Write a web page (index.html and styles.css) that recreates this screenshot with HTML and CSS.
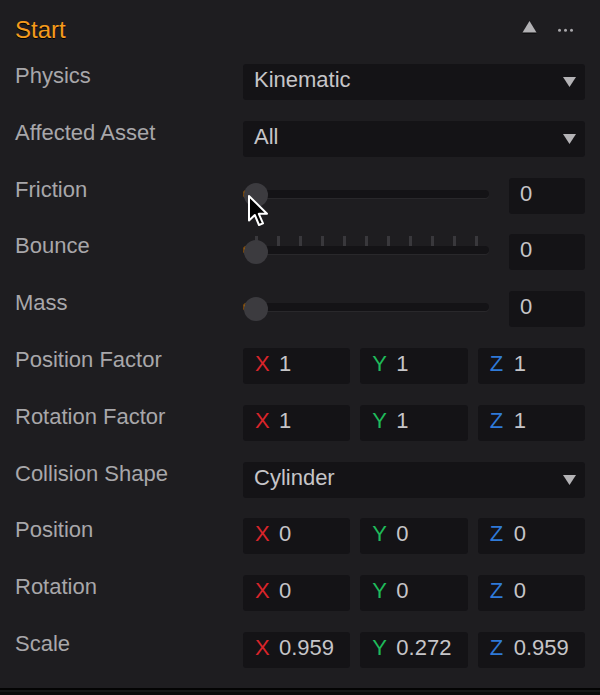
FILE: index.html
```html
<!DOCTYPE html>
<html>
<head>
<meta charset="utf-8">
<link rel="stylesheet" href="styles.css">
</head>
<body>
<div class="panel">
  <div class="header">
    <span class="title">Start</span>
    <svg class="hdr-icons" width="63" height="14" viewBox="0 0 63 14">
      <polygon points="0.5,13.6 7.5,2.2 14.5,13.6" fill="#050505"/>
      <polygon points="0.5,12.4 7.5,1 14.5,12.4" fill="#b3b2b5"/>
      <circle cx="37.5" cy="10.3" r="1.5" fill="#a9a8ab"/>
      <circle cx="43.5" cy="10.3" r="1.5" fill="#a9a8ab"/>
      <circle cx="49.5" cy="10.3" r="1.5" fill="#a9a8ab"/>
    </svg>
  </div>
  <div class="rows">
    <div class="row">
      <div class="label">Physics</div>
      <div class="box select"><span>Kinematic</span><svg class="caret" width="13" height="10" viewBox="0 0 13 10"><polygon points="0,0 13,0 6.5,10" fill="#b4b3b6"/></svg></div>
    </div>
    <div class="row">
      <div class="label">Affected Asset</div>
      <div class="box select"><span>All</span><svg class="caret" width="13" height="10" viewBox="0 0 13 10"><polygon points="0,0 13,0 6.5,10" fill="#b4b3b6"/></svg></div>
    </div>
    <div class="row">
      <div class="label">Friction</div>
      <div class="slider-row">
        <div class="slider">
          <div class="track"></div>
          <div class="fill"></div>
          <div class="thumb"></div>
        </div>
        <div class="box num">0</div>
      </div>
    </div>
    <div class="row">
      <div class="label">Bounce</div>
      <div class="slider-row">
        <div class="slider">
          <div class="ticks">
            <i></i><i></i><i></i><i></i><i></i><i></i><i></i><i></i><i></i><i></i><i></i>
          </div>
          <div class="track"></div>
          <div class="fill"></div>
          <div class="thumb"></div>
        </div>
        <div class="box num">0</div>
      </div>
    </div>
    <div class="row">
      <div class="label">Mass</div>
      <div class="slider-row">
        <div class="slider">
          <div class="track"></div>
          <div class="fill"></div>
          <div class="thumb"></div>
        </div>
        <div class="box num">0</div>
      </div>
    </div>
    <div class="row">
      <div class="label">Position Factor</div>
      <div class="xyz">
        <div class="box vec"><span class="ax x">X</span><span>1</span></div>
        <div class="box vec"><span class="ax y">Y</span><span>1</span></div>
        <div class="box vec"><span class="ax z">Z</span><span>1</span></div>
      </div>
    </div>
    <div class="row">
      <div class="label">Rotation Factor</div>
      <div class="xyz">
        <div class="box vec"><span class="ax x">X</span><span>1</span></div>
        <div class="box vec"><span class="ax y">Y</span><span>1</span></div>
        <div class="box vec"><span class="ax z">Z</span><span>1</span></div>
      </div>
    </div>
    <div class="row">
      <div class="label">Collision Shape</div>
      <div class="box select"><span>Cylinder</span><svg class="caret" width="13" height="10" viewBox="0 0 13 10"><polygon points="0,0 13,0 6.5,10" fill="#b4b3b6"/></svg></div>
    </div>
    <div class="row">
      <div class="label">Position</div>
      <div class="xyz">
        <div class="box vec"><span class="ax x">X</span><span>0</span></div>
        <div class="box vec"><span class="ax y">Y</span><span>0</span></div>
        <div class="box vec"><span class="ax z">Z</span><span>0</span></div>
      </div>
    </div>
    <div class="row">
      <div class="label">Rotation</div>
      <div class="xyz">
        <div class="box vec"><span class="ax x">X</span><span>0</span></div>
        <div class="box vec"><span class="ax y">Y</span><span>0</span></div>
        <div class="box vec"><span class="ax z">Z</span><span>0</span></div>
      </div>
    </div>
    <div class="row">
      <div class="label">Scale</div>
      <div class="xyz">
        <div class="box vec"><span class="ax x">X</span><span>0.959</span></div>
        <div class="box vec"><span class="ax y">Y</span><span>0.272</span></div>
        <div class="box vec"><span class="ax z">Z</span><span>0.959</span></div>
      </div>
    </div>
  </div>
</div>
<div class="footer"></div>
<svg class="cursor" width="24" height="34" viewBox="0 0 24 34">
  <path d="M2,2 L2,26.5 L7.8,21 L12,31 L16,29.3 L11.8,19.8 L20,19.8 Z" fill="#000" stroke="#fff" stroke-width="2" stroke-linejoin="round"/>
</svg>
</body>
</html>
```

FILE: styles.css
```css
html {
  background: #0b0b0b;
}
body {
  margin: 0;
  width: 600px;
  height: 695px;
  overflow: hidden;
  position: relative;
  font-family: "Liberation Sans", Arial, sans-serif;
  background: #0b0b0b;
}
.panel {
  height: 688px;
  background: #1e1d20;
  box-sizing: border-box;
}
.header {
  display: flex;
  justify-content: space-between;
  align-items: flex-start;
  padding: 16px 15px 0 15px;
}
.title {
  font-size: 24px;
  line-height: 27px;
  color: #f49b1c;
  text-shadow: 0 1px 0 #000;
}
.hdr-icons {
  display: block;
  margin-top: 4px;
}
.rows {
  display: flex;
  flex-direction: column;
  gap: 20.8px;
  padding: 21px 15px 0 15px;
}
.row {
  display: grid;
  grid-template-columns: 228px 342px;
  align-items: start;
}
.label {
  font-size: 22px;
  line-height: 24px;
  color: #a8a7aa;
  white-space: nowrap;
}
.box {
  height: 36px;
  box-sizing: border-box;
  background: #141316;
  border-radius: 3px;
  font-size: 22px;
  line-height: 32px;
  color: #c6c5c8;
  white-space: nowrap;
}
.select {
  display: flex;
  justify-content: space-between;
  align-items: center;
  padding: 0 9px 0 11px;
}
.select span {
  line-height: 32px;
  align-self: flex-start;
}
.caret {
  display: block;
}
.slider-row {
  display: flex;
  gap: 20px;
}
.slider {
  position: relative;
  width: 246px;
  height: 36px;
}
.track {
  position: absolute;
  left: 0;
  right: 0;
  top: 12px;
  height: 8px;
  border-radius: 4px;
  background: #141316;
  box-shadow: 0 1px 0 #29282b;
}
.fill {
  position: absolute;
  left: 0;
  top: 12px;
  width: 14px;
  height: 8px;
  border-radius: 4px 0 0 4px;
  background: #c57812;
  box-shadow: inset 1px 0 0 #6b3f0a;
}
.thumb {
  position: absolute;
  left: 1px;
  top: 5.5px;
  width: 24px;
  height: 24px;
  border-radius: 50%;
  background: #3c3b3f;
}
.ticks {
  position: absolute;
  left: 11.5px;
  top: 2px;
  width: 223px;
  height: 10px;
  display: flex;
  justify-content: space-between;
}
.ticks i {
  display: block;
  width: 3px;
  height: 10px;
  background: #39383c;
}
.num {
  width: 76px;
  padding-left: 11px;
}
.xyz {
  display: grid;
  grid-template-columns: 1fr 1fr 1fr;
  gap: 10px;
}
.vec {
  display: flex;
  padding-left: 12px;
}
.ax {
  width: 24px;
  flex: none;
}
.ax.x { color: #d9242a; }
.ax.y { color: #1fbb5b; }
.ax.z { color: #2f7ad8; }
.footer {
  height: 1.5px;
  border-top: 2.5px solid #040404;
  background: #171717;
}
.cursor {
  position: absolute;
  left: 246.5px;
  top: 193.5px;
}
```
